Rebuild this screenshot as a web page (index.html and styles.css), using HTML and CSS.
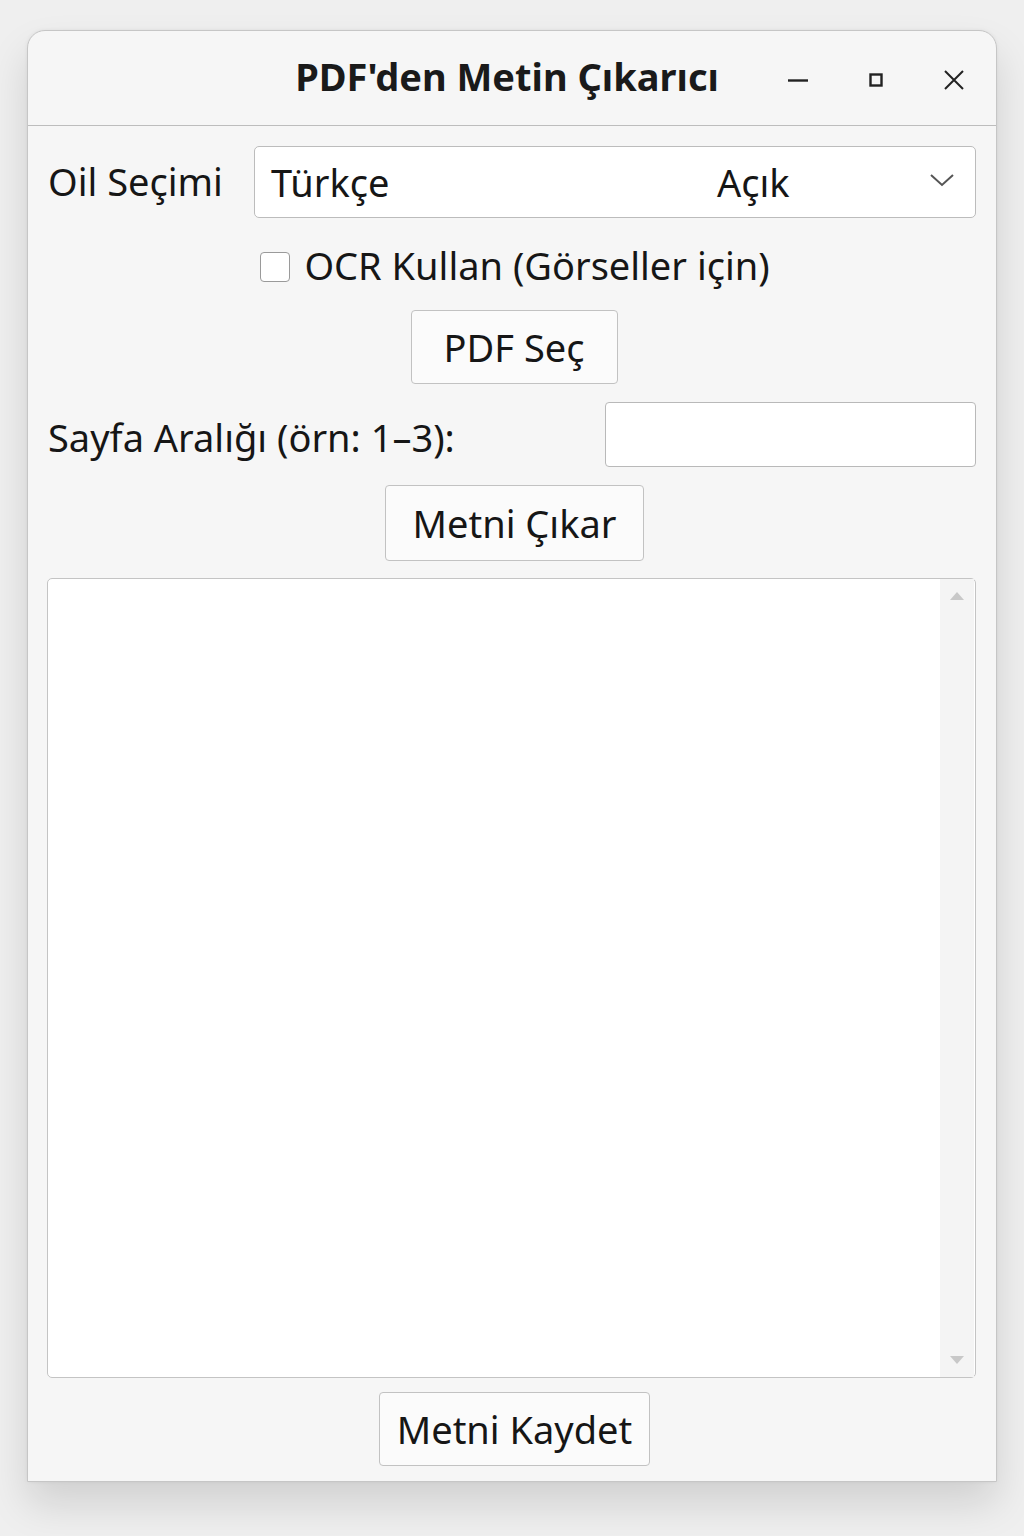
FILE: index.html
```html
<!DOCTYPE html>
<html lang="tr">
<head>
<meta charset="utf-8">
<title>PDF'den Metin Çıkarıcı</title>
<link rel="stylesheet" href="styles.css">
</head>
<body>
<div class="window">
  <div class="titlebar">
    <div class="title">PDF'den Metin Çıkarıcı</div>
    <div class="controls">
      <span class="ctl ctl-min"><svg width="24" height="24" viewBox="0 0 24 24"><path d="M2 12.5h20" stroke="#222" stroke-width="2.4"/></svg></span>
      <span class="ctl ctl-max"><svg width="24" height="24" viewBox="0 0 24 24"><rect x="6.5" y="6.5" width="11" height="11" fill="none" stroke="#222" stroke-width="2.4"/></svg></span>
      <span class="ctl ctl-close"><svg width="24" height="24" viewBox="0 0 24 24"><path d="M3 3L21 21M21 3L3 21" stroke="#222" stroke-width="2"/></svg></span>
    </div>
  </div>
  <div class="content">
    <div class="row row-lang">
      <span class="label">Oil Seçimi</span>
      <div class="combo">
        <span class="combo-value">Türkçe</span>
        <span class="combo-extra">Açık</span>
        <svg class="chev" width="26" height="16" viewBox="0 0 26 16"><path d="M2 3L13 13L24 3" fill="none" stroke="#555" stroke-width="2"/></svg>
      </div>
    </div>
    <div class="check-row">
      <span class="checkbox"></span>
      <span class="check-label">OCR Kullan (Görseller için)</span>
    </div>
    <div class="btn-row btn-pdf"><button class="btn">PDF Seç</button></div>
    <div class="row row-range">
      <span class="label">Sayfa Aralığı (örn: 1–3):</span>
      <div class="input"></div>
    </div>
    <div class="btn-row btn-extract"><button class="btn">Metni Çıkar</button></div>
    <div class="textarea">
      <div class="text-body"></div>
      <div class="scrollbar">
        <svg width="16" height="10" viewBox="0 0 16 10"><path d="M1 9L8 1L15 9Z" fill="#c8c8c8"/></svg>
        <svg width="16" height="10" viewBox="0 0 16 10"><path d="M1 1L8 9L15 1Z" fill="#c8c8c8"/></svg>
      </div>
    </div>
    <div class="btn-row btn-save"><button class="btn">Metni Kaydet</button></div>
  </div>
</div>
</body>
</html>
```

FILE: styles.css
```css
html, body {
  margin: 0;
  padding: 0;
}
body {
  background: #efefef;
  font-family: "Noto Sans", "Open Sans", "DejaVu Sans", sans-serif;
  color: #161616;
  padding: 30px 27px 0 27px;
  height: 1536px;
  box-sizing: border-box;
}
.window {
  width: 970px;
  height: 1452px;
  background: #f6f6f6;
  border: 1px solid #c6c6c6;
  border-radius: 18px 18px 0 0;
  box-sizing: border-box;
  box-shadow: 0 22px 40px rgba(0, 0, 0, 0.13), 0 0 4px rgba(0,0,0,0.06);
  display: flex;
  flex-direction: column;
}
.titlebar {
  height: 94px;
  border-bottom: 1px solid #bdbdbd;
  position: relative;
  display: flex;
  align-items: center;
  justify-content: center;
  flex-shrink: 0;
}
.title {
  font-size: 38px;
  font-weight: 700;
  letter-spacing: 0;
  margin-left: -10px;
  margin-top: -4px;
  color: #1a1a1a;
}
.controls {
  position: absolute;
  right: 30px;
  top: 37px;
  display: flex;
  gap: 54px;
}
.ctl {
  width: 24px;
  height: 24px;
  display: block;
}
.ctl svg { display: block; }
.content {
  flex: 1;
  display: flex;
  flex-direction: column;
  padding: 20px 20px 16px 20px;
}
.row {
  display: flex;
  align-items: center;
}
.label {
  font-size: 38px;
  white-space: nowrap;
}
.row-lang .label {
  width: 206px;
  flex-shrink: 0;
  margin-top: -2px;
}
.combo {
  flex: 1;
  height: 72px;
  background: #ffffff;
  border: 1px solid #bcbcbc;
  border-radius: 5px;
  box-sizing: border-box;
  display: flex;
  align-items: center;
  padding: 0 20px 0 16px;
  font-size: 38px;
}
.combo-value { width: 446px; }
.combo-extra { flex: 1; }
.chev { display: block; margin-top: -4px; }
.check-row {
  margin-top: 29px;
  height: 40px;
  display: flex;
  align-items: center;
  justify-content: center;
  gap: 14px;
  padding-left: 6px;
}
.checkbox {
  width: 30px;
  height: 30px;
  border: 1.5px solid #9a9a9a;
  border-radius: 4px;
  background: #fff;
  box-sizing: border-box;
}
.check-label {
  font-size: 38px;
  margin-top: -4px;
}
.btn-row {
  display: flex;
  justify-content: center;
}
.btn {
  font-family: inherit;
  font-size: 38px;
  color: #161616;
  background: #fbfbfb;
  border: 1px solid #c2c2c2;
  border-radius: 4px;
  padding: 0;
  line-height: 1;
  white-space: nowrap;
  box-sizing: border-box;
}
.btn-pdf { margin-top: 23px; }
.btn-pdf .btn { height: 74px; width: 207px; margin-left: 4px; }
.row-range {
  margin-top: 18px;
  justify-content: space-between;
}
.row-range .label { margin-top: 4px; }
.input {
  width: 371px;
  height: 65px;
  background: #fff;
  border: 1px solid #b9b9b9;
  border-radius: 4px;
  box-sizing: border-box;
}
.btn-extract { margin-top: 18px; }
.btn-extract .btn { height: 76px; width: 259px; margin-left: 5px; }
.textarea {
  margin-top: 17px;
  height: 800px;
  background: #fff;
  border: 1px solid #c4c4c4;
  border-radius: 5px;
  box-sizing: border-box;
  display: flex;
  margin-left: -1px;
}
.text-body { flex: 1; }
.scrollbar {
  width: 34px;
  background: #f4f4f4;
  display: flex;
  flex-direction: column;
  justify-content: space-between;
  align-items: center;
  padding: 12px 0 12px 0;
  margin: 0 1px 0 0;
}
.scrollbar svg { display: block; }
.btn-save { margin-top: 14px; }
.btn-save .btn { height: 74px; width: 271px; margin-left: 5px; }
```
